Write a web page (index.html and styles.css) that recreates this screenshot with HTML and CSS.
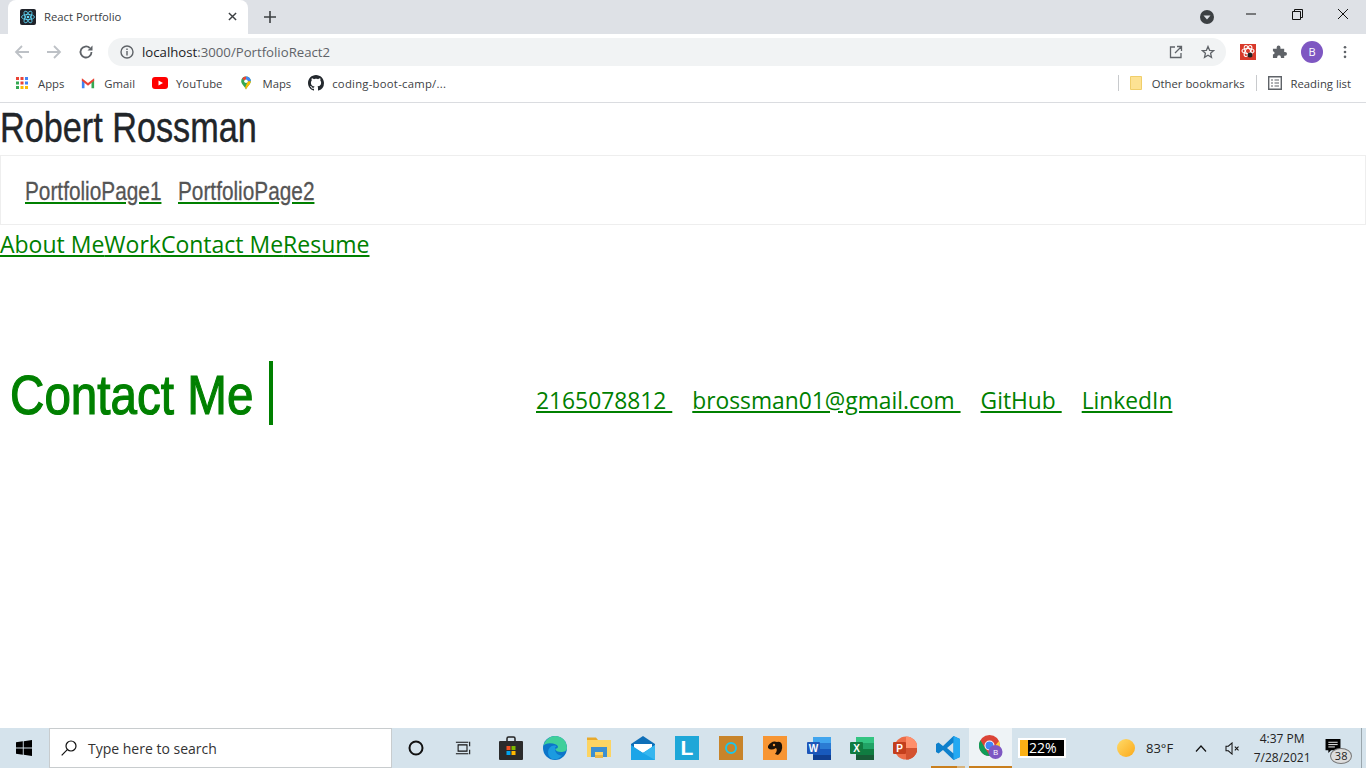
FILE: index.html
```html
<!DOCTYPE html>
<html lang="en">
<head>
    <meta charset="UTF-8">
    <meta name="viewport" content="width=device-width, initial-scale=1.0">
    <title>React Portfolio</title>
    <link rel="stylesheet" href="styles.css">
</head>
<body>

<div class="browser">
    <div class="tabStrip">
        <div class="tab">
            <svg class="favicon" viewBox="0 0 16 16">
                <rect width="16" height="16" rx="2" fill="#20232a"/>
                <g fill="none" stroke="#61dafb" stroke-width="0.8">
                    <ellipse cx="8" cy="8" rx="6.5" ry="2.6"/>
                    <ellipse cx="8" cy="8" rx="6.5" ry="2.6" transform="rotate(60 8 8)"/>
                    <ellipse cx="8" cy="8" rx="6.5" ry="2.6" transform="rotate(120 8 8)"/>
                </g>
                <circle cx="8" cy="8" r="1.3" fill="#61dafb"/>
            </svg>
            <span class="tabTitle">React Portfolio</span>
            <svg class="tabClose" viewBox="0 0 10 10"><path d="M1 1L9 9M9 1L1 9" stroke="#3c4043" stroke-width="1.6"/></svg>
        </div>
        <svg class="newTab" viewBox="0 0 12 12"><path d="M6 0V12M0 6H12" stroke="#3c4043" stroke-width="1.6"/></svg>
        <div class="windowControls">
            <svg class="profileDot" viewBox="0 0 14 14">
                <circle cx="7" cy="7" r="7" fill="#3c4043"/>
                <path d="M3.5 5.5H10.5L7 9.5Z" fill="#dee1e6"/>
            </svg>
            <svg class="winBtn" viewBox="0 0 46 20"><path d="M18 10H28" stroke="#111" stroke-width="1"/></svg>
            <svg class="winBtn" viewBox="0 0 46 20">
                <path d="M18.5 7.5H26.5V15.5H18.5ZM20.5 7.5V5.5H28.5V13.5H26.5" fill="none" stroke="#111" stroke-width="1"/>
            </svg>
            <svg class="winBtn" viewBox="0 0 46 20"><path d="M18 5L28 15M28 5L18 15" stroke="#111" stroke-width="1"/></svg>
        </div>
    </div>

    <div class="toolbar">
        <svg class="navIcon" viewBox="0 0 16 16"><path d="M15 8H2M8 2L2 8L8 14" fill="none" stroke="#bdc1c6" stroke-width="1.8"/></svg>
        <svg class="navIcon" viewBox="0 0 16 16"><path d="M1 8H14M8 2L14 8L8 14" fill="none" stroke="#bdc1c6" stroke-width="1.8"/></svg>
        <svg class="navIcon" viewBox="0 0 16 16">
            <path d="M13.5 8A5.5 5.5 0 1 1 11.8 4" fill="none" stroke="#5f6368" stroke-width="1.8"/>
            <path d="M14.5 1.5V6.5H9.5Z" fill="#5f6368"/>
        </svg>
        <div class="omnibox">
            <svg class="infoIcon" viewBox="0 0 14 14">
                <circle cx="7" cy="7" r="6" fill="none" stroke="#5f6368" stroke-width="1.4"/>
                <path d="M7 6V10.5M7 3.5V5" stroke="#5f6368" stroke-width="1.4"/>
            </svg>
            <span class="url"><span class="urlHost">localhost</span>:3000/PortfolioReact2</span>
            <svg class="omniIcon" viewBox="0 0 14 14">
                <path d="M6 2H1.5V12.5H12V8M8 1.500H12.500V6M12.500 1.500L6 8" fill="none" stroke="#5f6368" stroke-width="1.3"/>
            </svg>
            <svg class="omniIcon" viewBox="0 0 14 14">
                <path d="M7 1.500L8.600 5.300L12.700 5.600L9.600 8.300L10.500 12.300L7 10.200L3.500 12.300L4.400 8.300L1.300 5.600L5.400 5.300Z" fill="none" stroke="#5f6368" stroke-width="1.3"/>
            </svg>
        </div>
        <svg class="extIcon" viewBox="0 0 16 16">
            <rect width="16" height="16" fill="#d93a2b"/>
            <g fill="none" stroke="#fff" stroke-width="1.100">
                <ellipse cx="8" cy="7" rx="6" ry="2.500"/>
                <ellipse cx="8" cy="7" rx="6" ry="2.500" transform="rotate(60 8 7)"/>
                <ellipse cx="8" cy="7" rx="6" ry="2.500" transform="rotate(120 8 7)"/>
            </g>
            <circle cx="10" cy="11" r="2.500" fill="#222"/>
        </svg>
        <svg class="puzzle" viewBox="0 0 16 16">
            <path d="M1 5H5V3.500A2 2 0 0 1 9 3.500V5H13V8.500H14A2 2 0 0 1 14 12.500H13V15H9.500V14A2 2 0 0 0 5.500 14V15H1V11H2A2 2 0 0 0 2 8H1Z" fill="#5f6368"/>
        </svg>
        <div class="avatar">B</div>
        <svg class="kebab" viewBox="0 0 4 16">
            <circle cx="2" cy="2.500" r="1.500" fill="#5f6368"/>
            <circle cx="2" cy="8" r="1.500" fill="#5f6368"/>
            <circle cx="2" cy="13.500" r="1.500" fill="#5f6368"/>
        </svg>
    </div>

    <div class="bookmarks">
        <div class="bookmark">
            <svg class="bmIcon" viewBox="0 0 14 14">
                <g fill="#ea4335"><rect x="1" y="1" width="3" height="3"/><rect x="5.500" y="1" width="3" height="3"/></g>
                <rect x="10" y="1" width="3" height="3" fill="#4285f4"/>
                <rect x="1" y="5.500" width="3" height="3" fill="#34a853"/>
                <rect x="5.500" y="5.500" width="3" height="3" fill="#ea4335"/>
                <rect x="10" y="5.500" width="3" height="3" fill="#4285f4"/>
                <rect x="1" y="10" width="3" height="3" fill="#34a853"/>
                <rect x="5.500" y="10" width="3" height="3" fill="#fbbc04"/>
                <rect x="10" y="10" width="3" height="3" fill="#fbbc04"/>
            </svg>
            <span>Apps</span>
        </div>
        <div class="bookmark">
            <svg class="bmIcon" viewBox="0 0 16 14">
                <path d="M1 3V13H4V6Z" fill="#4285f4"/>
                <path d="M12 6V13H15V3Z" fill="#34a853"/>
                <path d="M1 1.500L8 7L15 1.500V4.500L8 10L1 4.500Z" fill="#ea4335"/>
            </svg>
            <span>Gmail</span>
        </div>
        <div class="bookmark">
            <svg class="bmIcon bmWide" viewBox="0 0 16 12">
                <rect width="16" height="12" rx="3" fill="#f00"/>
                <path d="M6.500 3.500L11 6L6.500 8.500Z" fill="#fff"/>
            </svg>
            <span>YouTube</span>
        </div>
        <div class="bookmark">
            <svg class="bmIcon" viewBox="0 0 12 16">
                <path d="M6 0.500A5.500 5.500 0 0 1 11.500 6C11.500 9.500 7.500 11.500 6 15.500C4.500 11.500 0.500 9.500 0.500 6A5.500 5.500 0 0 1 6 0.500Z" fill="#34a853"/>
                <path d="M6 0.500A5.500 5.500 0 0 1 11.500 6L8 6A2 2 0 0 0 6 4Z" fill="#4285f4"/>
                <path d="M6 0.500A5.500 5.500 0 0 0 1.500 3L4.500 5Q5 4 6 4Z" fill="#ea4335"/>
                <path d="M11.500 6C11.500 9.500 7.500 11.500 6 15.500L5 13L8 6Z" fill="#fbbc04"/>
                <circle cx="6" cy="6" r="2" fill="#fff"/>
            </svg>
            <span>Maps</span>
        </div>
        <div class="bookmark">
            <svg class="bmIcon bmGit" viewBox="0 0 16 16">
                <path fill="#24292e" d="M8 0C3.580 0 0 3.580 0 8c0 3.540 2.290 6.530 5.470 7.590.4.070.55-.17.55-.38 0-.19-.01-.82-.01-1.490-2.010.370-2.530-.490-2.690-.940-.090-.230-.480-.940-.820-1.130-.280-.150-.680-.520-.010-.530.630-.010 1.080.580 1.230.820.720 1.210 1.870.870 2.330.660.070-.520.280-.870.510-1.070-1.780-.2-3.640-.890-3.640-3.950 0-.870.310-1.590.820-2.150-.080-.2-.360-1.020.080-2.120 0 0 .670-.210 2.200.820.640-.180 1.320-.270 2-.270s1.360.090 2 .270c1.530-1.040 2.200-.820 2.200-.820.440 1.100.160 1.920.080 2.120.510.560.820 1.270.820 2.150 0 3.070-1.870 3.750-3.650 3.950.290.250.540.730.540 1.480 0 1.070-.010 1.930-.010 2.200 0 .210.150.460.550.380A8.010 8.010 0 0 0 16 8c0-4.420-3.580-8-8-8z"/>
            </svg>
            <span class="bmRepo">coding-boot-camp/...</span>
        </div>
        <div class="bmRight">
            <div class="bmDivider"></div>
            <svg class="bmFolder" viewBox="0 0 12 14">
                <path d="M0.500 0.500H11.500V13.500H0.500Z" fill="#fde293" stroke="#f0ce6a"/>
            </svg>
            <span>Other bookmarks</span>
            <div class="bmDivider"></div>
            <svg class="bmList" viewBox="0 0 14 14">
                <path d="M0.700 0.700H13.300V13.300H0.700Z" fill="none" stroke="#5f6368" stroke-width="1.400"/>
                <path d="M3 4H5M6.500 4H11M3 7H5M6.500 7H11M3 10H5M6.500 10H11" stroke="#5f6368" stroke-width="1.200"/>
            </svg>
            <span>Reading list</span>
        </div>
    </div>
</div>

<div class="page">
    <h1 class="siteName"><span>Robert Rossman</span></h1>
    <nav class="portfolioNav">
        <div class="navItem"><a href="#">PortfolioPage1</a></div>
        <div class="navItem"><a href="#">PortfolioPage2</a></div>
    </nav>
    <div class="sectionLinks">
        <a href="#">About Me</a><a href="#">Work</a><a href="#">Contact Me</a><a href="#">Resume</a>
    </div>
    <div class="contact">
        <h2 class="contactTitle"><span>Contact Me</span></h2>
        <div class="contactLinks">
            <a href="#">2165078812 </a>
            <a href="#">brossman01@gmail.com </a>
            <a href="#">GitHub </a>
            <a href="#">LinkedIn</a>
        </div>
    </div>
</div>

<div class="taskbar">
    <svg class="startIcon" viewBox="0 0 16 16">
        <path d="M0 2.300L6.800 1.300V7.500H0ZM7.700 1.200L16 0V7.500H7.700ZM0 8.500H6.800V14.700L0 13.700ZM7.700 8.500H16V16L7.700 14.800Z" fill="#000"/>
    </svg>
    <div class="searchBox">
        <svg class="searchIcon" viewBox="0 0 16 16">
            <circle cx="10" cy="6" r="5" fill="none" stroke="#111" stroke-width="1.200"/>
            <path d="M6.300 9.700L0.700 15.300" stroke="#111" stroke-width="1.200"/>
        </svg>
        <span>Type here to search</span>
    </div>
    <div class="slot slotCortana">
        <svg class="tbIcon" viewBox="0 0 16 16"><circle cx="8" cy="8" r="6.500" fill="none" stroke="#111" stroke-width="2"/></svg>
    </div>
    <div class="slot">
        <svg class="tbIcon" viewBox="0 0 18 16">
            <path d="M3.500 4.500H13.500V11.500H3.500ZM1 1.500H15M1 14.500H15M16.500 1V6M16.500 10V15" fill="none" stroke="#111" stroke-width="1.200"/>
        </svg>
    </div>
    <div class="slot slotStore">
        <svg class="appIcon" viewBox="0 0 24 24">
            <path d="M8 6V2.500Q8 1 9.500 1H14.500Q16 1 16 2.500V6" fill="none" stroke="#222" stroke-width="1.500"/>
            <rect y="5" width="24" height="19" rx="1" fill="#2b2b2b"/>
            <rect x="7.500" y="10" width="4" height="4" fill="#f25022"/>
            <rect x="12.500" y="10" width="4" height="4" fill="#7fba00"/>
            <rect x="7.500" y="15" width="4" height="4" fill="#00a4ef"/>
            <rect x="12.500" y="15" width="4" height="4" fill="#ffb900"/>
        </svg>
    </div>
    <div class="slot">
        <svg class="appIcon" viewBox="0 0 24 24">
            <circle cx="12" cy="12" r="12" fill="#0c75c9"/>
            <path d="M0.500 10C2 3 8 0 12 0C19 0 24 5 24 12C24 15 21 16 18 16C15 16 12.500 15 12 12.500C14 13.500 17 10.500 13 8.500C8 6.500 2 7 0.500 10Z" fill="#3fcf9a"/>
            <path d="M12 12.500C12 17 15 19.500 19 19.500C16 23 12 24 9 23C3 20 4 10 11 9.500C12.500 9.500 13.500 10 13.500 10.500C12.500 10.500 12 11.500 12 12.500Z" fill="#1b9be0"/>
        </svg>
    </div>
    <div class="slot">
        <svg class="appIcon" viewBox="0 0 24 24">
            <path d="M0 4V1.500H9L11 4Z" fill="#e8a92a"/>
            <rect y="4" width="24" height="17" fill="#fcd462"/>
            <path d="M4 11H20V21H16V16H8V21H4Z" fill="#3c8fd0"/>
            <rect x="8" y="19" width="8" height="3" fill="#e8b648"/>
        </svg>
    </div>
    <div class="slot">
        <svg class="appIcon" viewBox="0 0 24 24">
            <path d="M12 0L24 8V24H0V8Z" fill="#0f6fb8"/>
            <path d="M3 8H21V12L12 17L3 12Z" fill="#fff"/>
            <path d="M0 9L12 17L24 9V24H0Z" fill="#1ca5e8"/>
            <path d="M12 17L24 9V24Z" fill="#36b6ef"/>
        </svg>
    </div>
    <div class="slot">
        <div class="squareApp squareBlue">L</div>
    </div>
    <div class="slot">
        <div class="squareApp squareBrown"><div class="ringMark"></div></div>
    </div>
    <div class="slot">
        <svg class="appIcon" viewBox="0 0 24 24">
            <rect width="24" height="24" fill="#f79533"/>
            <path d="M5 10Q9 4 14 6Q18 5 19 9Q20 15 15 19L12 18Q15 14 13 12Q8 15 5 12Z" fill="#1d1208"/>
            <circle cx="11" cy="9" r="1.200" fill="#f79533"/>
        </svg>
    </div>
    <div class="slot slotTight">
        <svg class="appIcon" viewBox="0 0 24 24">
            <rect x="6" y="1" width="18" height="6" fill="#41a5ee"/>
            <rect x="6" y="7" width="18" height="6" fill="#2b7cd3"/>
            <rect x="6" y="13" width="18" height="6" fill="#185abd"/>
            <rect x="6" y="19" width="18" height="5" fill="#103f91"/>
            <rect y="6" width="13" height="12" rx="1" fill="#1e56b8"/>
            <text x="6.500" y="15.500" class="officeLetter">W</text>
        </svg>
    </div>
    <div class="slot slotTight">
        <svg class="appIcon" viewBox="0 0 24 24">
            <rect x="6" y="1" width="18" height="6" fill="#33c481"/>
            <rect x="6" y="7" width="18" height="6" fill="#21a366"/>
            <rect x="6" y="13" width="18" height="6" fill="#107c41"/>
            <rect x="6" y="19" width="18" height="5" fill="#185c37"/>
            <rect y="6" width="13" height="12" rx="1" fill="#107c41"/>
            <text x="6.500" y="15.500" class="officeLetter">X</text>
        </svg>
    </div>
    <div class="slot slotTight">
        <svg class="appIcon" viewBox="0 0 24 24">
            <circle cx="13" cy="12" r="11.500" fill="#ed6c47"/>
            <path d="M13 0.500A11.500 11.500 0 0 1 24.500 12H13Z" fill="#ff8f6b"/>
            <path d="M13 12H24.500A11.500 11.500 0 0 1 13 23.500Z" fill="#d35230"/>
            <rect y="6" width="13" height="12" rx="1" fill="#c43e1c"/>
            <text x="6.500" y="15.500" class="officeLetter">P</text>
        </svg>
    </div>
    <div class="slot slotTight slotCode">
        <svg class="appIcon" viewBox="0 0 24 24">
            <path d="M17.500 0L24 3V21L17.500 24L7 14L2.500 17.500L0 16V8L2.500 6.500L7 10ZM17.500 6.500L11 12L17.500 17.500Z" fill="#0e80cc" fill-rule="evenodd"/>
            <path d="M17.500 0L24 3V21L17.500 24Z" fill="#23a9f2"/>
        </svg>
    </div>
    <div class="slot slotTight slotChrome">
        <svg class="appIcon" viewBox="0 0 24 24">
            <circle cx="10.500" cy="10.500" r="10.500" fill="#db4437"/>
            <path d="M10.500 21A10.500 10.500 0 0 1 1.400 5.200L6 13L11 21Z" fill="#0f9d58"/>
            <path d="M20 6A10.500 10.500 0 0 1 11 21L15 12Z" fill="#ffcd40"/>
            <circle cx="10.500" cy="10.500" r="5" fill="#fff"/>
            <circle cx="10.500" cy="10.500" r="4" fill="#4285f4"/>
            <circle cx="16.500" cy="17" r="7" fill="#7e57c2"/>
            <text x="16.500" y="20" class="chromeBadge">B</text>
        </svg>
    </div>
    <div class="battery">
        <div class="batteryCell">
            <div class="batteryFill"></div>
            <span class="batteryText">22%</span>
        </div>
    </div>
    <div class="tray">
        <div class="sun"></div>
        <span class="temp">83°F</span>
        <svg class="chevron" viewBox="0 0 12 7"><path d="M1 6.500L6 1L11 6.500" fill="none" stroke="#111" stroke-width="1.200"/></svg>
        <svg class="speaker" viewBox="0 0 16 14">
            <path d="M1 4.500H3.500L7.500 1V13L3.500 9.500H1Z" fill="none" stroke="#111" stroke-width="1.100"/>
            <path d="M10.500 5L14.500 9M14.500 5L10.500 9" stroke="#111" stroke-width="1.100"/>
        </svg>
        <div class="clock">
            <div>4:37 PM</div>
            <div>7/28/2021</div>
        </div>
        <div class="notify">
            <svg class="notifyIcon" viewBox="0 0 16 15">
                <path d="M0 0H16V12H6L3 15V12H0Z" fill="#000"/>
                <path d="M3 3.500H13M3 6H13M3 8.500H10" stroke="#fff" stroke-width="1"/>
            </svg>
            <span class="notifyCount">38</span>
        </div>
        <div class="desktopEdge"></div>
    </div>
</div>

</body>
</html>
```

FILE: styles.css
```css
html, body {
    height: 100%;
}

body {
    margin: 0;
    display: flex;
    flex-direction: column;
    height: 768px;
    overflow: hidden;
    font-family: "Open Sans", "Noto Sans", sans-serif;
    background-color: #fff;
}

svg {
    display: block;
    flex-shrink: 0;
}

/* browser chrome */
.browser {
    font-family: "Open Sans", Roboto, sans-serif;
    border-bottom: 1px solid #dadce0;
    height: 102px;
}

.tabStrip {
    display: flex;
    align-items: flex-end;
    height: 34px;
    background-color: #dee1e6;
}

.tab {
    display: flex;
    align-items: center;
    width: 240px;
    height: 34px;
    margin-left: 8px;
    padding: 0 0 1px 12px;
    box-sizing: border-box;
    background-color: #fff;
    border-radius: 8px 8px 0 0;
}

.favicon {
    width: 16px;
    height: 16px;
}

.tabTitle {
    flex: 1;
    margin-left: 8px;
    font-size: 11.3px;
    color: #3c4043;
}

.tabClose {
    width: 9px;
    height: 9px;
    margin-right: 11px;
}

.newTab {
    width: 12px;
    height: 12px;
    margin: 0 0 11px 16px;
}

.windowControls {
    display: flex;
    align-items: center;
    margin-left: auto;
    height: 34px;
}

.profileDot {
    width: 14px;
    height: 14px;
    margin: -1px 14px 0 0;
}

.winBtn {
    width: 46px;
    height: 20px;
    margin-top: -6px;
}

.toolbar {
    display: flex;
    align-items: center;
    height: 35px;
    padding-left: 14px;
}

.navIcon {
    width: 16px;
    height: 16px;
    margin-right: 16px;
}

.omnibox {
    display: flex;
    align-items: center;
    width: 1118px;
    height: 28px;
    margin-left: -2px;
    padding: 0 11px 0 12px;
    box-sizing: border-box;
    background-color: #f1f3f4;
    border-radius: 14px;
}

.infoIcon {
    width: 14px;
    height: 14px;
}

.url {
    flex: 1;
    margin-left: 8px;
    font-size: 13.2px;
    color: #5f6368;
}

.urlHost {
    color: #202124;
}

.omniIcon {
    width: 14px;
    height: 14px;
    margin-left: 18px;
}

.extIcon {
    width: 16px;
    height: 16px;
    margin-left: 14px;
}

.puzzle {
    width: 15px;
    height: 15px;
    margin-left: 16px;
}

.avatar {
    display: flex;
    align-items: center;
    justify-content: center;
    width: 22px;
    height: 22px;
    margin-left: 14px;
    border-radius: 50%;
    background-color: #7e57c2;
    color: #fff;
    font-size: 11px;
}

.kebab {
    width: 4px;
    height: 14px;
    margin-left: 20px;
}

.bookmarks {
    display: flex;
    align-items: center;
    height: 33px;
    padding: 0 0 5px 15px;
    box-sizing: border-box;
    font-size: 11.3px;
    color: #3c4043;
}

.bookmark {
    display: flex;
    align-items: center;
    margin-right: 17px;
}

.bmRepo {
    letter-spacing: 0.25px;
}

.bmIcon {
    width: 14px;
    height: 14px;
    margin-right: 9px;
}

.bmWide {
    width: 16px;
    height: 12px;
    margin-right: 8px;
}

.bmGit {
    width: 16px;
    height: 16px;
    margin-right: 8px;
}

.bmRight {
    display: flex;
    align-items: center;
    margin-left: auto;
    padding-right: 15px;
}

.bmDivider {
    width: 1px;
    height: 16px;
    margin: 0 11px;
    background-color: #c8cacd;
}

.bmFolder {
    width: 12px;
    height: 14px;
    margin-right: 10px;
}

.bmList {
    width: 14px;
    height: 14px;
    margin-right: 9px;
}

/* portfolio page */
.page {
    flex: 1;
    min-height: 0;
}

.page a {
    color: green;
}

.siteName {
    margin: 0;
    height: 52px;
    font-family: "Liberation Sans", sans-serif;
    font-size: 42px;
    line-height: 50px;
    font-weight: 400;
    color: #212529;
    -webkit-text-stroke: 0.4px #212529;
}

/* no condensed family is installed, so the heading face is squeezed */
.siteName span {
    display: inline-block;
    transform: scaleX(0.815);
    transform-origin: left;
}

.portfolioNav {
    display: flex;
    gap: 16px;
    height: 70px;
    padding: 2px 0 0 24px;
    box-sizing: border-box;
    align-items: center;
    border: 1px solid #eee;
    font-family: "Liberation Sans", sans-serif;
    font-size: 26px;
}

.navItem {
    width: 137px;
}

.page .navItem a {
    display: inline-block;
    white-space: nowrap;
    transform: scaleX(0.8);
    transform-origin: left;
    color: #555;
    text-decoration-color: green;
    -webkit-text-stroke: 0.3px #555;
}

.sectionLinks {
    font-size: 23px;
    line-height: 38px;
}

.contact {
    display: flex;
    align-items: center;
    margin-top: 98px;
}

.contactTitle {
    width: 244px;
    height: 64px;
    margin: 0 0 0 10px;
    padding-right: 15px;
    border-right: 4px solid green;
    font-family: "Liberation Sans", sans-serif;
    font-size: 56px;
    line-height: 68px;
    font-weight: 400;
    color: green;
    -webkit-text-stroke: 1.2px green;
}

.contactTitle span {
    display: inline-block;
    white-space: nowrap;
    transform: scaleX(0.85);
    transform-origin: left;
}

.contactLinks {
    display: flex;
    gap: 20px;
    margin: 14px 0 0 263px;
    font-size: 22.8px;
}

.contactLinks a {
    white-space: pre;
}

/* windows taskbar */
.taskbar {
    display: flex;
    align-items: center;
    height: 40px;
    background-color: #d5e3ec;
}

.startIcon {
    width: 16px;
    height: 16px;
    margin: 0 17px 0 16px;
}

.searchBox {
    display: flex;
    align-items: center;
    width: 343px;
    height: 40px;
    padding-left: 11px;
    box-sizing: border-box;
    background-color: #fff;
    border: 1px solid #c8ccce;
    font-size: 14px;
    color: #333;
}

.searchIcon {
    width: 16px;
    height: 16px;
    margin-right: 11px;
}

.slot {
    display: flex;
    align-items: center;
    justify-content: center;
    width: 44px;
    height: 40px;
    flex-shrink: 0;
}

.slotCortana {
    margin: 0 3px 0 2px;
}

.slotStore {
    margin-left: 4px;
}

.slotTight {
    width: 43px;
}

.slotCode {
    background: linear-gradient(90deg, #c97f1e 0 26px, #d8b27a 26px 34px) center bottom / 34px 2px no-repeat;
}

.slotChrome {
    background-color: #eef3f6;
    border-bottom: 2px solid #c97f1e;
    box-sizing: border-box;
}

.tbIcon {
    width: 16px;
    height: 16px;
}

.appIcon {
    width: 24px;
    height: 24px;
}

.squareApp {
    display: flex;
    align-items: center;
    justify-content: center;
    width: 24px;
    height: 24px;
}

.squareBlue {
    background-color: #1ea7d8;
    color: #fff;
    font-family: "Liberation Sans", sans-serif;
    font-size: 21px;
    font-weight: 700;
}

.squareBrown {
    background-color: #c8842a;
}

.ringMark {
    width: 8px;
    height: 8px;
    border: 2px solid #1dc6e8;
    border-radius: 50%;
}

.officeLetter {
    font-family: "Liberation Sans", sans-serif;
    font-size: 10px;
    font-weight: 700;
    fill: #fff;
    text-anchor: middle;
}

.chromeBadge {
    font-family: "Open Sans", sans-serif;
    font-size: 8px;
    fill: #fff;
    text-anchor: middle;
}

.battery {
    margin-left: 6px;
    padding: 2px;
    background-color: #fff;
}

.batteryCell {
    display: flex;
    align-items: center;
    width: 44px;
    height: 16px;
    background-color: #000;
}

.batteryFill {
    width: 8px;
    height: 16px;
    background-color: #fbb116;
}

.batteryText {
    margin-left: 1px;
    color: #fff;
    font-size: 14px;
    line-height: 16px;
}

.tray {
    display: flex;
    align-items: center;
    flex: 1;
    font-size: 13px;
    color: #222;
}

.sun {
    width: 18px;
    height: 18px;
    margin-left: 51px;
    border-radius: 50%;
    background: linear-gradient(135deg, #ffdb6a, #fba919);
}

.temp {
    margin-left: 11px;
}

.chevron {
    width: 12px;
    height: 7px;
    margin-left: 22px;
}

.speaker {
    width: 15px;
    height: 13px;
    margin-left: 18px;
}

.clock {
    width: 70px;
    margin-left: 7px;
    font-size: 12px;
    line-height: 19px;
    text-align: center;
}

.notify {
    position: relative;
    margin-left: 4px;
}

.notifyIcon {
    width: 16px;
    height: 14px;
    margin: -4px 0 0 4px;
}

.notifyCount {
    position: absolute;
    left: 9px;
    top: 5px;
    width: 20px;
    height: 14px;
    border: 1px solid #777;
    border-radius: 50%;
    background-color: #ddd;
    font-size: 11px;
    line-height: 14px;
    text-align: center;
}

.desktopEdge {
    width: 1px;
    height: 40px;
    margin-left: auto;
    margin-right: 4px;
    background-color: #9aa6ad;
}
```
